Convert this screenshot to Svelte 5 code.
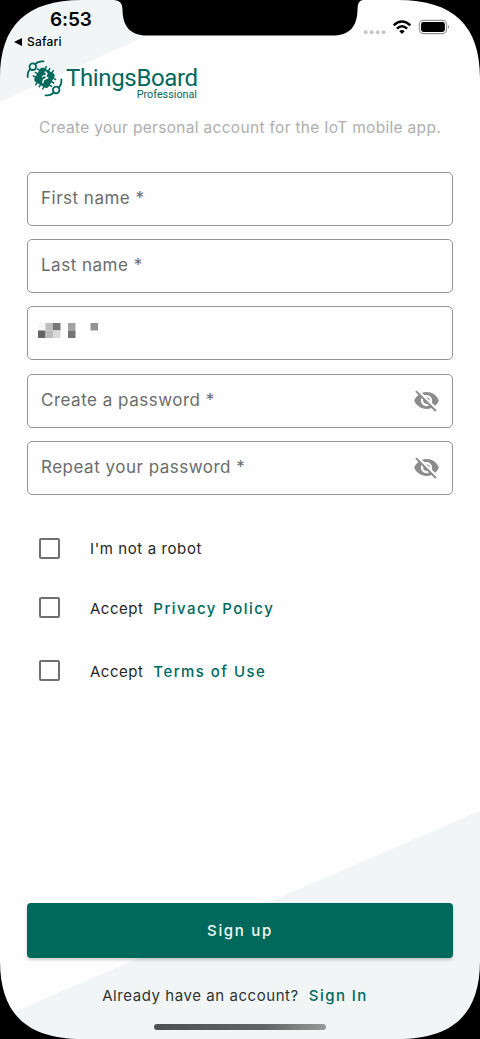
<script>
  const fields = [
    { label: 'First name *' },
    { label: 'Last name *' },
    { masked: true },
    { label: 'Create a password *', secret: true },
    { label: 'Repeat your password *', secret: true }
  ];
  const mosaic = [
    [0, 0, '#f7f7f7'], [1, 0, '#bdbdbd'], [2, 0, '#777'], [4, 0, '#a3a3a3'], [7, 0, '#939393'],
    [0, 1, '#646464'], [1, 1, '#bbb'], [2, 1, '#d9d9d9'], [4, 1, '#757575']
  ];
  const spokes = [-4, 0, 4];
</script>

<div class="screen">
  <svg class="backdrop" viewBox="0 0 480 1039" aria-hidden="true">
    <path fill="#f1f5f5" d="M0 0H232L146 36L0 102ZM480 811V1039H0V1018Z" />
  </svg>

  <header>
    <div class="clock"><b>6:53</b><span class="back"><svg width="8" height="8" viewBox="0 0 8 8"><path d="M0 4L8 0V8Z" /></svg>Safari</span></div>
    <svg class="status" width="90" height="20" viewBox="362 17 90 20" aria-hidden="true">
      <g fill="#c8c8c8"><circle cx="365.8" cy="32.2" r="2" /><circle cx="371.7" cy="32.2" r="2" /><circle cx="377.6" cy="32.2" r="2" /><circle cx="383.5" cy="32.2" r="2" /></g>
      <g fill="none" stroke="#000" stroke-width="2.5"><path d="M393.7 25.3Q402 17.7 410.3 25.3" /><path d="M396.9 28.6Q402 24 407.1 28.6" /></g>
      <path d="M399.3 31.2Q402 29 404.7 31.2L402 34Z" />
      <rect x="419.3" y="20.4" width="27.3" height="13.2" rx="4" fill="none" stroke="#929292" stroke-width="1.1" />
      <rect x="421" y="22" width="23.9" height="10" rx="2.4" />
      <path fill="#777" d="M448 24.8Q449.8 26.8 448 29Z" />
    </svg>
  </header>

  <main>
    <div class="brand">
      <svg width="38" height="38" viewBox="0 0 38 38" aria-hidden="true">
        <g transform="translate(18.5 18.7) rotate(30)" fill="#00695c">
          <rect x="-8.2" y="-8.2" width="16.4" height="16.4" rx="3" />
          {#each [0, 90, 180, 270] as side}
            {#each spokes as offset}
              <rect x={offset - 0.75} y="-11.2" width="1.5" height="5" rx=".6" transform="rotate({side})" />
            {/each}
          {/each}
        </g>
        <path d="M18.8 12.6L20.9 14.6L19.4 17.4L21.4 18.9L17.6 20.7L16.6 24.3" fill="none" stroke="#fff" stroke-width="1.5" />
        <path d="M16 18.2L18.6 16" stroke="#fff" stroke-width="1.1" />
        <g fill="none" stroke="#00695c" stroke-width="1.8" stroke-linecap="round">
          <circle cx="6.8" cy="7.7" r="3.3" /><path d="M1.7 18Q1.2 13 4.3 10.3M9.1 5.2Q12.2 1.8 17.5 2.4" />
          <circle cx="30.2" cy="31" r="3.3" /><path d="M35.4 20.5Q35.7 25.8 32.6 28.6M27.8 33.4Q24.6 37 19.5 36.3" />
        </g>
      </svg>
      <div class="wordmark"><span>ThingsBoard</span><small>Professional</small></div>
    </div>
    <p class="intro">Create your personal account for the IoT mobile app.</p>

    <div class="fields">
      {#each fields as field}
        <div class="field">
          {#if field.masked}
            <svg class="mosaic" width="60" height="15" viewBox="0 0 8 2" preserveAspectRatio="none">
              {#each mosaic as [x, y, color]}<rect {x} {y} width="1" height="1" fill={color} />{/each}
            </svg>
          {:else}
            <span>{field.label}</span>
          {/if}
          {#if field.secret}
            <svg class="eye" width="27" height="27" viewBox="0 0 24 24" fill="#8c8c8c"><path d="M12 7c2.76 0 5 2.24 5 5 0 .65-.13 1.26-.36 1.83l2.92 2.92c1.51-1.26 2.7-2.89 3.43-4.75-1.73-4.39-6-7.5-11-7.5-1.4 0-2.74.25-3.98.7l2.16 2.16C10.74 7.13 11.35 7 12 7zM2 4.27l2.28 2.28.46.46C3.08 8.3 1.78 10.02 1 12c1.73 4.39 6 7.5 11 7.5 1.55 0 3.03-.3 4.38-.84l.42.42L19.73 22 21 20.73 3.27 3 2 4.27zM7.53 9.8l1.55 1.55c-.05.21-.08.43-.08.65 0 1.66 1.34 3 3 3 .22 0 .44-.03.65-.08l1.55 1.55c-.67.33-1.41.53-2.2.53-2.76 0-5-2.24-5-5 0-.79.2-1.53.53-2.2zm4.31-.78l3.15 3.15.02-.16c0-1.66-1.34-3-3-3l-.17.01z" /></svg>
          {/if}
        </div>
      {/each}
    </div>

    <div class="checks">
      <div class="check robot"><i></i><span>I'm not a robot</span></div>
      <div class="check privacy"><i></i><span>Accept</span><a>Privacy Policy</a></div>
      <div class="check terms"><i></i><span>Accept</span><a>Terms of Use</a></div>
    </div>

    <button>Sign up</button>
    <div class="signin"><span>Already have an account?</span><a>Sign In</a></div>
  </main>
  <div class="home"></div>

  <svg class="bezel" viewBox="0 0 480 1039" aria-hidden="true">
    <path d="M0 0H82C26 0 0 26 0 78ZM398 0H480V78C480 26 454 0 398 0ZM0 961C0 1013 26 1039 82 1039H0ZM480 961V1039H398C454 1039 480 1013 480 961Z" />
    <path d="M114 0Q122.5 .5 122.5 9C122.5 26 130 35.5 147 35.5H333C350 35.5 357.5 26 357.5 9Q357.5 .5 363 0Z" />
  </svg>
</div>

<style>
  :global(body) { margin: 0; background: #000; }
  .screen { position: relative; box-sizing: border-box; width: 480px; height: 1039px; overflow: hidden; background: #fefefe; font-family: Inter, sans-serif; display: flex; flex-direction: column; isolation: isolate; }
  .backdrop, .bezel { position: absolute; inset: 0; width: 480px; height: 1039px; z-index: -1; }
  .bezel { z-index: 2; pointer-events: none; }
  header { height: 59px; flex: none; display: flex; justify-content: space-between; box-sizing: border-box; padding: 8px 28px 0 14px; }
  .clock { display: flex; flex-direction: column; }
  .clock b { font-size: 19px; line-height: 24px; font-weight: 600; margin-left: 36px; letter-spacing: -.1px; }
  .back { display: flex; align-items: center; gap: 5px; font-size: 12px; line-height: 20px; font-weight: 500; letter-spacing: .2px; }
  .status { margin-top: 9px; }
  main { height: 950px; display: flex; flex-direction: column; padding: 0 27px; }
  .brand { display: flex; height: 45px; color: #00695c; }
  .brand svg { flex: none; margin-left: -1px; }
  .wordmark { width: 131px; display: flex; flex-direction: column; font-family: Roboto, sans-serif; margin-left: 2px; }
  .wordmark span { font-size: 24px; line-height: 24px; margin-top: 7px; white-space: nowrap; letter-spacing: -.35px; }
  .wordmark small { align-self: flex-end; font-size: 10.8px; line-height: 11px; margin-top: -1px; white-space: nowrap; }
  .intro { margin: 14px 0 0 12px; font-size: 15.5px; line-height: 20px; letter-spacing: .31px; color: #afafaf; white-space: nowrap; }
  .fields { display: grid; gap: 13.3px; margin-top: 33.7px; }
  .field { height: 54px; box-sizing: border-box; border: 1px solid #949494; border-radius: 5px; display: flex; align-items: center; justify-content: space-between; padding: 0 12px 0 13px; font-size: 17px; letter-spacing: .5px; color: #6c6c6c; }
  .field span { margin-top: -1px; }
  .mosaic { margin: -5px 0 0 -3px; }
  .checks { margin-top: 42.5px; }
  .check { height: 22px; display: flex; align-items: center; padding-left: 12px; font-size: 15px; color: #272727; letter-spacing: .5px; }
  .robot { letter-spacing: .6px; }
  .check i { width: 21px; height: 21px; box-sizing: border-box; border: 2px solid #707070; border-radius: 2px; margin-right: 30px; }
  .privacy { margin-top: 38.3px; }
  .privacy i, .terms i { margin-top: -2px; }
  .terms { margin-top: 41px; }
  .check a { margin-left: 10px; }
  a { color: #00695c; font-weight: 500; letter-spacing: 1.45px; }
  button { margin-top: auto; height: 54.5px; flex: none; border: 0; border-radius: 4px; background: #00695c; color: #f0f8f6; font: 500 15px Inter, sans-serif; letter-spacing: 1.7px; box-shadow: 0 2px 3px #0003; }
  .signin { display: flex; justify-content: center; height: 22px; align-items: center; gap: 10px; margin: 26.5px 0 3px -10px; font-size: 15px; letter-spacing: .56px; color: #303333; white-space: nowrap; }
  .home { width: 172px; height: 6px; flex: none; border-radius: 3px; margin: 15px 0 0 154px; background: linear-gradient(90deg, #4d5050, #626565 65%, #999); }
</style>
